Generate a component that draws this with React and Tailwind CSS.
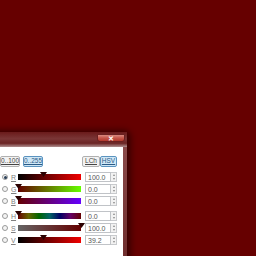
import React from "react";

const rows = [
  { key: "R", value: "100.0", grad: "bg-[linear-gradient(to_right,#000000,#f00000)]", pos: 0.39, checked: true },
  { key: "G", value: "0.0", grad: "bg-[linear-gradient(to_right,#640000,#64ff00)]", pos: 0 },
  { key: "B", value: "0.0", grad: "bg-[linear-gradient(to_right,#640000,#6400ff)]", pos: 0 },
  { key: "H", value: "0.0", grad: "bg-[linear-gradient(to_right,#640000,#646400,#006400,#006464,#000064,#640064,#640000)]", pos: 0, gapTop: true },
  { key: "S", value: "100.0", grad: "bg-[linear-gradient(to_right,#646464,#640000)]", pos: 1 },
  { key: "V", value: "39.2", grad: "bg-[linear-gradient(to_right,#000000,#f00000)]", pos: 0.392 },
];

function Radio({ checked }) {
  return (
    <div className="w-[6px] h-[6px] rounded-full border border-[#9a9b9b] bg-[#f4f4f4] flex items-center justify-center">
      {checked && <div className="w-[3px] h-[3px] rounded-full bg-[#2a3f58]" />}
    </div>
  );
}

function Row({ row }) {
  return (
    <div className={`flex items-center h-[12px] ${row.gapTop ? "mt-[3px]" : ""}`}>
      <div className="w-[11px] pl-[2px] flex items-center">
        <Radio checked={row.checked} />
      </div>
      <span className="w-[7px] text-[7px] leading-none text-[#808080] underline">{row.key}</span>
      <div className="relative w-[63px] h-[6px]">
        <div className={`w-full h-full ${row.grad}`} />
        <svg
          className="absolute top-[-2px]"
          style={{ left: `${row.pos * 63 - 3}px` }}
          width="7"
          height="5"
          viewBox="0 0 7 5"
        >
          <polygon points="0,0 7,0 3.5,5" fill="#2a0000" />
        </svg>
      </div>
      <div className="ml-[4px] w-[26px] h-[10px] border border-[#c0c3c7] bg-white flex items-center pl-[2px]">
        <span className="text-[7px] leading-none text-[#555]">{row.value}</span>
      </div>
      <div className="w-[6px] h-[10px] border border-l-0 border-[#c8cacd] bg-[#f2f2f2] flex flex-col items-center justify-around">
        <div className="w-0 h-0 border-x-[1.5px] border-x-transparent border-b-[2px] border-b-[#888]" />
        <div className="w-0 h-0 border-x-[1.5px] border-x-transparent border-t-[2px] border-t-[#888]" />
      </div>
    </div>
  );
}

function Btn({ children, active, w }) {
  return (
    <div
      className={`h-[11px] ${w} rounded-[2px] border flex items-center justify-center text-[6.5px] leading-none ${
        active ? "border-[#5b93bf] bg-[#cfe7f6] text-[#2a5a86]" : "border-[#b0b0b0] bg-[#f2f2f2] text-[#444]"
      }`}
    >
      <span className="underline decoration-[0.5px]">{children}</span>
    </div>
  );
}

export default function App() {
  return (
    <div className="relative w-[256px] h-[256px] overflow-hidden bg-[#660000] font-['Liberation_Sans',sans-serif]">
      <div className="absolute left-[-100px] top-[132px] w-[227px] h-[140px] rounded-tr-[5px] bg-[#6b1c1c] shadow-[2px_0_6px_2px_rgba(0,0,0,0.45)] flex flex-col">
        <div className="h-[15px] shrink-0 bg-[linear-gradient(to_bottom,#6a1a1a,#7a3636_45%,#6a2424_75%,#b09090)] flex justify-end pr-[2px]">
          <div className="mt-[2px] w-[28px] h-[8px] rounded-b-[3px] border border-[#6a2020] bg-[linear-gradient(to_bottom,#d88a80,#c5564a_50%,#b0382c)] flex items-center justify-center">
            <span className="text-[7px] leading-none font-bold text-white">✕</span>
          </div>
        </div>
        <div className="flex-1 flex pr-[4px] bg-[linear-gradient(to_bottom,#8a4a4a,#6b2a2a)]">
          <div className="flex-1 bg-white" />
          <div className="w-[123px] bg-white pt-[9px] flex flex-col">
            <div className="flex items-center h-[11px] pr-[6px]">
              <Btn w="w-[20px]">0..100</Btn>
              <div className="ml-[3px]">
                <Btn w="w-[20px]" active>0..255</Btn>
              </div>
              <div className="flex-1" />
              <Btn w="w-[18px]">LCh</Btn>
              <Btn w="w-[17px]" active>HSV</Btn>
            </div>
            <div className="mt-[4px] flex flex-col">
              {rows.map((r) => (
                <Row key={r.key} row={r} />
              ))}
            </div>
          </div>
        </div>
      </div>
    </div>
  );
}
